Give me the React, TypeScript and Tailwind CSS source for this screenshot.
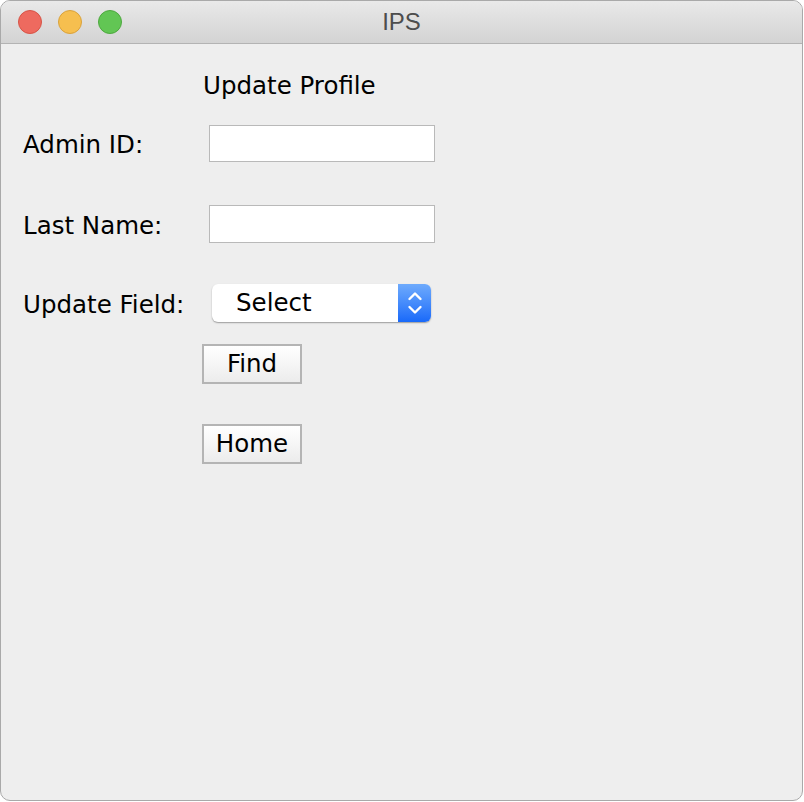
import React from 'react';

const font = { fontFamily: '"DejaVu Sans", "Noto Sans", sans-serif' };

function TrafficLights() {
  return (
    <div className="flex items-center gap-[16px]">
      <div className="w-[24px] h-[24px] rounded-full bg-[#ee6a5f] border border-[#d65447]"></div>
      <div className="w-[24px] h-[24px] rounded-full bg-[#f6bf4f] border border-[#d9a23c]"></div>
      <div className="w-[24px] h-[24px] rounded-full bg-[#62c654] border border-[#4ea83f]"></div>
    </div>
  );
}

function TextField() {
  return <div className="w-[226px] h-full bg-white border border-[#b9b9b9]"></div>;
}

function SelectBox() {
  return (
    <div className="ml-[3px] w-[219px] h-full flex rounded-[6px] bg-white shadow-[0_1px_1.5px_rgba(0,0,0,0.35)] overflow-hidden">
      <div className="flex-1 flex items-center pl-[24px] text-[24.5px] leading-[30px] text-black">Select</div>
      <div className="w-[33px] h-full bg-gradient-to-b from-[#6eaafc] to-[#1869f9] flex items-center justify-center">
        <svg width="16" height="28" viewBox="0 0 16 28" fill="none" stroke="white" strokeWidth="2.4" strokeLinecap="round" strokeLinejoin="round">
          <path d="M2.5 10 L8 4.5 L13.5 10" />
          <path d="M2.5 18 L8 23.5 L13.5 18" />
        </svg>
      </div>
    </div>
  );
}

function PushButton({ label }: { label: string }) {
  return (
    <div className="ml-[201px] w-[100px] h-[40px] border-2 border-[#b4b4b4] bg-gradient-to-b from-white to-[#ececec] flex items-center justify-center text-[24.5px] leading-[30px] text-black">
      {label}
    </div>
  );
}

function Label({ text }: { text: string }) {
  return <div className="w-[186px] h-full flex items-center pt-[3px] text-[24.5px] leading-[30px]">{text}</div>;
}

export default function App() {
  return (
    <div className="w-[804px] h-[802px] bg-white" style={font}>
      <div className="w-[803px] h-[801px] rounded-[10px] border border-[#a9a9a9] bg-[#eeeeee] overflow-hidden flex flex-col">
        {/* Title bar */}
        <div className="relative h-[43px] shrink-0 bg-gradient-to-b from-[#e9e9e9] to-[#d3d3d3] border-b border-[#b3b3b3] flex items-center pl-[17px]">
          <TrafficLights />
          <div
            className="absolute inset-0 flex items-center justify-center text-[24px] text-[#4d4d4d]"
            style={{ fontFamily: '"Liberation Sans", Arial, sans-serif' }}
          >
            IPS
          </div>
        </div>

        {/* Form */}
        <div className="flex flex-col text-black">
          <div className="mt-[26px] h-[30px] pl-[202px] flex items-center text-[24.5px] leading-[30px] pt-[1px]">Update Profile</div>

          <div className="mt-[25px] h-[37px] pl-[22px] flex">
            <Label text="Admin ID:" />
            <TextField />
          </div>

          <div className="mt-[43px] h-[38px] pl-[22px] flex">
            <Label text="Last Name:" />
            <TextField />
          </div>

          <div className="mt-[41px] h-[38px] pl-[22px] flex">
            <Label text="Update Field:" />
            <SelectBox />
          </div>

          <div className="mt-[22px]">
            <PushButton label="Find" />
          </div>
          <div className="mt-[40px]">
            <PushButton label="Home" />
          </div>
        </div>
      </div>
    </div>
  );
}
